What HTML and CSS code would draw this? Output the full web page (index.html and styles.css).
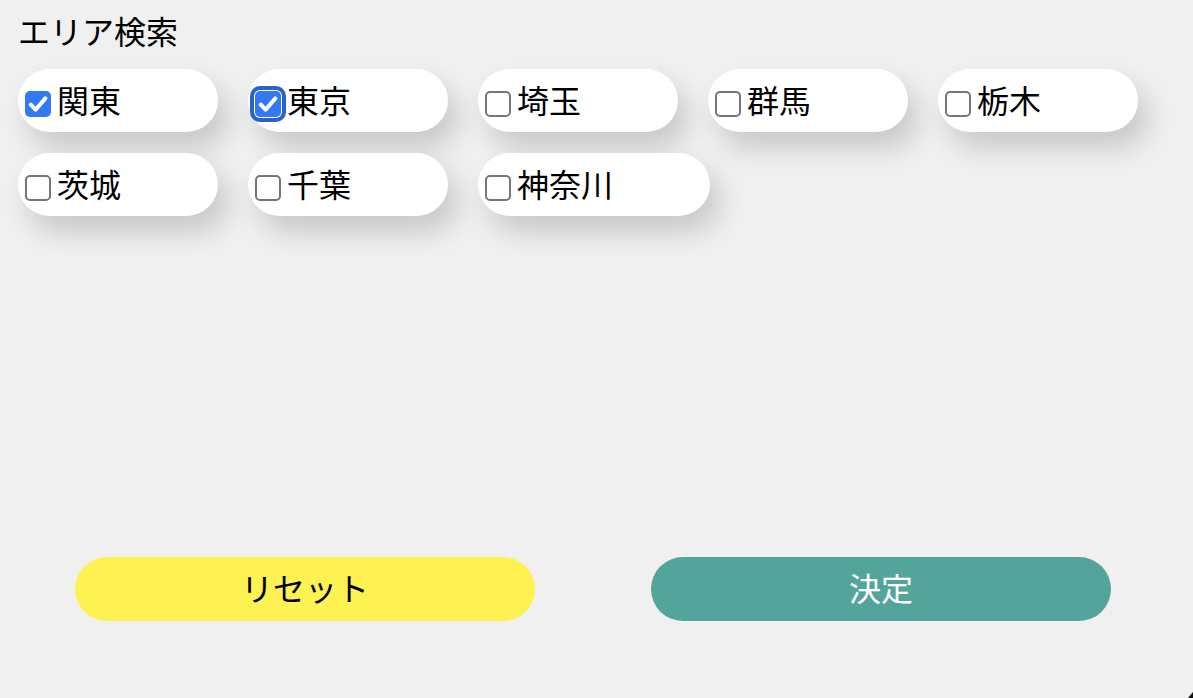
FILE: index.html
```html
<!DOCTYPE html>
<html lang="ja">
<head>
<meta charset="utf-8">
<title>エリア検索</title>
<link rel="stylesheet" href="styles.css">
</head>
<body>
<div class="page">
  <h1 class="title">エリア検索</h1>
  <div class="areas">
    <label class="pill"><span class="box checked"><svg viewBox="0 0 26 26" width="26" height="26"><path d="M5.8 13.6 L10.6 18.6 L20.4 7.4" fill="none" stroke="#fff" stroke-width="4" stroke-linecap="round" stroke-linejoin="round"/></svg></span><span class="name">関東</span></label>
    <label class="pill"><span class="box checked focus"><svg viewBox="0 0 26 26" width="26" height="26"><path d="M5.8 13.6 L10.6 18.6 L20.4 7.4" fill="none" stroke="#fff" stroke-width="4" stroke-linecap="round" stroke-linejoin="round"/></svg></span><span class="name">東京</span></label>
    <label class="pill"><span class="box"></span><span class="name">埼玉</span></label>
    <label class="pill"><span class="box"></span><span class="name">群馬</span></label>
    <label class="pill"><span class="box"></span><span class="name">栃木</span></label>
    <label class="pill"><span class="box"></span><span class="name">茨城</span></label>
    <label class="pill"><span class="box"></span><span class="name">千葉</span></label>
    <label class="pill"><span class="box"></span><span class="name">神奈川</span></label>
  </div>
  <div class="actions">
    <button class="btn reset" type="button">リセット</button>
    <button class="btn submit" type="button">決定</button>
  </div>
</div>
<div class="corner"></div>
</body>
</html>
```
FILE: styles.css
```css
html, body {
  margin: 0;
  padding: 0;
  background: #f0f0f0;
  height: 100%;
  overflow: hidden;
}
body {
  font-family: "Noto Sans CJK JP", "Noto Sans", sans-serif;
  color: #000;
}
.page {
  padding: 14px 18px 0 18px;
}
.title {
  margin: 0 0 23px 0;
  font-size: 32px;
  line-height: 32px;
  font-weight: 400;
}
.areas {
  display: flex;
  flex-wrap: wrap;
  column-gap: 30px;
  row-gap: 21px;
}
.pill {
  display: inline-flex;
  align-items: center;
  height: 63px;
  box-sizing: border-box;
  padding: 0 97px 0 7px;
  background: #fff;
  border-radius: 32px;
  box-shadow: 10px 16px 28px rgba(0, 0, 0, 0.17);
}
.box {
  width: 26px;
  height: 26px;
  box-sizing: border-box;
  border: 2px solid #767676;
  border-radius: 5px;
  background: #fff;
  margin-top: 7px;
  margin-right: 6px;
  display: flex;
  align-items: center;
  justify-content: center;
  flex: none;
}
.box svg {
  display: block;
}
.box.checked {
  background: #3478f6;
  border: none;
}
.box.focus {
  box-shadow: 0 0 0 1px #fff, 0 0 0 5px #2862cf;
}
.name {
  font-size: 32px;
  line-height: 40px;
  padding-bottom: 3px;
}
.actions {
  display: flex;
  gap: 116px;
  margin-top: 341px;
  padding-left: 57px;
}
.btn {
  width: 460px;
  height: 64px;
  border: none;
  border-radius: 32px;
  font-family: "Noto Sans CJK JP", "Noto Sans", sans-serif;
  font-size: 32px;
  line-height: 40px;
  padding: 0 0 4px 0;
}
.reset {
  background: #fef152;
  color: #000;
}
.submit {
  background: #53a59b;
  color: #fff;
}
.corner {
  position: fixed;
  right: 0;
  bottom: 0;
  width: 0;
  height: 0;
  border-left: 5px solid transparent;
  border-bottom: 6px solid #111;
}
```
